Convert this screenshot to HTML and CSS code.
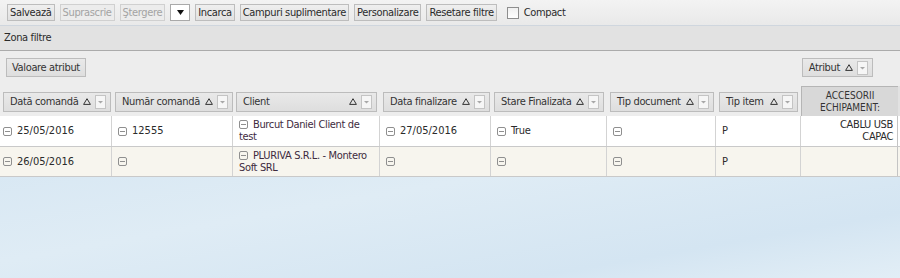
FILE: index.html
```html
<!DOCTYPE html>
<html>
<head>
<meta charset="utf-8">
<link rel="stylesheet" href="styles.css">
</head>
<body>
<div class="toolbar">
  <button class="btn">Salvează</button>
  <button class="btn dis">Suprascrie</button>
  <button class="btn dis">Ştergere</button>
  <span class="sel"><svg width="7" height="5" viewBox="0 0 7 5"><polygon points="0,0 7,0 3.5,5" fill="#111"/></svg></span>
  <button class="btn">Incarca</button>
  <button class="btn">Campuri suplimentare</button>
  <button class="btn">Personalizare</button>
  <button class="btn">Resetare filtre</button>
  <label class="chk"><span class="box"></span>Compact</label>
</div>
<div class="zone">Zona filtre</div>
<div class="panel">
  <div class="filters">
    <span class="hbtn plain">Valoare atribut</span>
    <span class="hbtn attr"><span class="lbl">Atribut</span><svg class="tri" width="8" height="7" viewBox="0 0 8 7"><polygon points="4,0.7 7.4,6.4 0.6,6.4" fill="none" stroke="#333" stroke-width="1"/></svg><span class="dd"><svg width="9" height="12" viewBox="0 0 9 12"><polygon points="2,5 7,5 4.5,7.5" fill="#a8a8a8"/></svg></span></span>
  </div>
  <div class="grid head">
    <div class="hc"><span class="hbtn"><span class="lbl">Dată comandă</span><svg class="tri" width="8" height="7" viewBox="0 0 8 7"><polygon points="4,0.7 7.4,6.4 0.6,6.4" fill="none" stroke="#333"/></svg><span class="dd"><svg width="9" height="12" viewBox="0 0 9 12"><polygon points="2,5 7,5 4.5,7.5" fill="#a8a8a8"/></svg></span></span></div>
    <div class="hc"><span class="hbtn"><span class="lbl">Număr comandă</span><svg class="tri" width="8" height="7" viewBox="0 0 8 7"><polygon points="4,0.7 7.4,6.4 0.6,6.4" fill="none" stroke="#333"/></svg><span class="dd"><svg width="9" height="12" viewBox="0 0 9 12"><polygon points="2,5 7,5 4.5,7.5" fill="#a8a8a8"/></svg></span></span></div>
    <div class="hc"><span class="hbtn"><span class="lbl">Client</span><svg class="tri" width="8" height="7" viewBox="0 0 8 7"><polygon points="4,0.7 7.4,6.4 0.6,6.4" fill="none" stroke="#333"/></svg><span class="dd"><svg width="9" height="12" viewBox="0 0 9 12"><polygon points="2,5 7,5 4.5,7.5" fill="#a8a8a8"/></svg></span></span></div>
    <div class="hc"><span class="hbtn"><span class="lbl">Data finalizare</span><svg class="tri" width="8" height="7" viewBox="0 0 8 7"><polygon points="4,0.7 7.4,6.4 0.6,6.4" fill="none" stroke="#333"/></svg><span class="dd"><svg width="9" height="12" viewBox="0 0 9 12"><polygon points="2,5 7,5 4.5,7.5" fill="#a8a8a8"/></svg></span></span></div>
    <div class="hc"><span class="hbtn"><span class="lbl">Stare Finalizata</span><svg class="tri" width="8" height="7" viewBox="0 0 8 7"><polygon points="4,0.7 7.4,6.4 0.6,6.4" fill="none" stroke="#333"/></svg><span class="dd"><svg width="9" height="12" viewBox="0 0 9 12"><polygon points="2,5 7,5 4.5,7.5" fill="#a8a8a8"/></svg></span></span></div>
    <div class="hc"><span class="hbtn"><span class="lbl">Tip document</span><svg class="tri" width="8" height="7" viewBox="0 0 8 7"><polygon points="4,0.7 7.4,6.4 0.6,6.4" fill="none" stroke="#333"/></svg><span class="dd"><svg width="9" height="12" viewBox="0 0 9 12"><polygon points="2,5 7,5 4.5,7.5" fill="#a8a8a8"/></svg></span></span></div>
    <div class="hc"><span class="hbtn"><span class="lbl">Tip item</span><svg class="tri" width="8" height="7" viewBox="0 0 8 7"><polygon points="4,0.7 7.4,6.4 0.6,6.4" fill="none" stroke="#333"/></svg><span class="dd"><svg width="9" height="12" viewBox="0 0 9 12"><polygon points="2,5 7,5 4.5,7.5" fill="#a8a8a8"/></svg></span></span></div>
    <div class="hc acc">ACCESORII<br>ECHIPAMENT:</div>
    <div class="hc rest"></div>
  </div>
</div>
<div class="grid row r1">
  <div class="c first d"><span class="ic"></span>25/05/2016</div>
  <div class="c d"><span class="ic"></span>12555</div>
  <div class="c client"><span class="txt"><span class="ic"></span>Burcut Daniel Client de test</span></div>
  <div class="c d"><span class="ic"></span>27/05/2016</div>
  <div class="c"><span class="ic"></span>True</div>
  <div class="c"><span class="ic"></span></div>
  <div class="c">P</div>
  <div class="c accv">CABLU USB<br>CAPAC</div>
  <div class="c last"></div>
</div>
<div class="grid row r2">
  <div class="c first d"><span class="ic"></span>26/05/2016</div>
  <div class="c"><span class="ic"></span></div>
  <div class="c client"><span class="txt"><span class="ic"></span>PLURIVA S.R.L. - Montero Soft SRL</span></div>
  <div class="c"><span class="ic"></span></div>
  <div class="c"><span class="ic"></span></div>
  <div class="c"><span class="ic"></span></div>
  <div class="c">P</div>
  <div class="c accv"></div>
  <div class="c last"></div>
</div>
</body>
</html>
```
FILE: styles.css
```css
html, body {
  margin: 0;
  padding: 0;
}
body {
  width: 900px;
  height: 278px;
  overflow: hidden;
  font-family: "DejaVu Sans Condensed", "DejaVu Sans", sans-serif;
  font-size: 11px;
  letter-spacing: -0.35px;
  color: #333;
  background:
    linear-gradient(160deg, rgba(255,255,255,0) 0%, rgba(255,255,255,0.6) 6%, rgba(255,255,255,0) 13%),
    linear-gradient(172deg, rgba(255,255,255,0) 20%, rgba(255,255,255,0.35) 30%, rgba(255,255,255,0) 40%),
    linear-gradient(170deg, #e3eef6 0%, #d7e7f3 35%, #dfecf5 60%, #d4e5f2 85%, #e2eef6 100%);
}
.toolbar {
  height: 25px;
  display: flex;
  align-items: center;
  gap: 5px;
  padding-left: 7px;
  background: linear-gradient(#f3f3f3, #e9e9e9);
  border-bottom: 1px solid #cfd6de;
}
.btn {
  font: inherit;
  letter-spacing: inherit;
  height: 17px;
  padding: 0 2px;
  margin: 0;
  border: 1px solid #bdbdbd;
  background: linear-gradient(#efefef, #e1e1e1);
  color: #2a2a2a;
  line-height: 15px;
}
.btn.dis {
  color: #a3a3a3;
  border-color: #d0d0d0;
  background: #ececec;
}
.sel {
  width: 18px;
  height: 15px;
  border: 1px solid #a9a9a9;
  background: #fff;
  display: flex;
  align-items: center;
  justify-content: center;
}
.chk {
  display: flex;
  align-items: center;
  gap: 5px;
  margin-left: 5px;
  color: #2a2a2a;
}
.chk .box {
  width: 10px;
  height: 10px;
  border: 1px solid #8e8e8e;
  background: linear-gradient(#f0f0f0, #fff);
}
.zone {
  height: 24px;
  line-height: 24px;
  padding-left: 4px;
  background: #e2e2e2;
  border-bottom: 1px solid #ababab;
  color: #2a2a2a;
}
.panel {
  background: #ededed;
}
.filters {
  height: 35px;
  display: flex;
  justify-content: space-between;
  align-items: flex-start;
  padding: 7px 27px 0 6px;
  box-sizing: border-box;
}
.hbtn {
  display: flex;
  align-items: center;
  height: 19px;
  box-sizing: border-box;
  border: 1px solid #bcbcbc;
  background: linear-gradient(#e9e9e9, #dedede);
  color: #333;
  padding: 0 4px 0 6px;
  white-space: nowrap;
}
.hbtn.plain {
  padding: 0 5px;
}
.hbtn .lbl {
  flex: 1;
  margin-right: 5px;
}
.tri {
  margin-right: 4px;
  flex: none;
}
.dd {
  width: 11px;
  height: 14px;
  box-sizing: border-box;
  border: 1px solid #c4c4c4;
  background: #f6f6f6;
  display: flex;
  align-items: center;
  justify-content: center;
}
.grid {
  display: grid;
  grid-template-columns: 112px 121px 147px 111px 116px 109px 85px 97px 1fr;
}
.head {
  height: 30px;
}
.hc {
  display: flex;
  align-items: center;
  padding: 1px 3px 0;
}
.hc .hbtn {
  flex: 1;
  height: 20px;
}
.hc.acc {
  box-sizing: border-box;
  padding: 0;
  justify-content: center;
  text-align: center;
  font-size: 10px;
  letter-spacing: 0;
  line-height: 12px;
  color: #333;
  background: #d8d8d8;
  border: 1px solid #b5b5b5;
  border-bottom: none;
  margin-right: -1px;
}
.hc.rest {
  background: #e2e2e2;
}
.row {
  height: 31px;
  box-sizing: border-box;
  border-bottom: 1px solid #c9c9c9;
}
.r1 { background: #fff; }
.r2 { background: #f7f5ee; height: 30px; }
.c {
  display: flex;
  align-items: center;
  padding-left: 6px;
  border-right: 1px solid #d3d3d3;
  color: #2b2b2b;
  line-height: 12px;
}
.c.d { letter-spacing: 0; }
.c.first { padding-left: 3px; }
.c.last { border-right: none; }
.c.client { color: #3e2b3e; padding-right: 4px; }
.c.accv {
  justify-content: flex-end;
  text-align: right;
  padding: 0 4px 0 0;
  border-right: 1px solid #c4c4c4;
}
.ic {
  display: inline-block;
  position: relative;
  width: 9px;
  height: 9px;
  box-sizing: border-box;
  border: 1px solid #8f8f8f;
  border-radius: 2px;
  margin-right: 5px;
  vertical-align: -1px;
  flex: none;
}
.ic::after {
  content: "";
  position: absolute;
  left: 1px;
  right: 1px;
  top: 3px;
  height: 1px;
  background: #8f8f8f;
}
```
